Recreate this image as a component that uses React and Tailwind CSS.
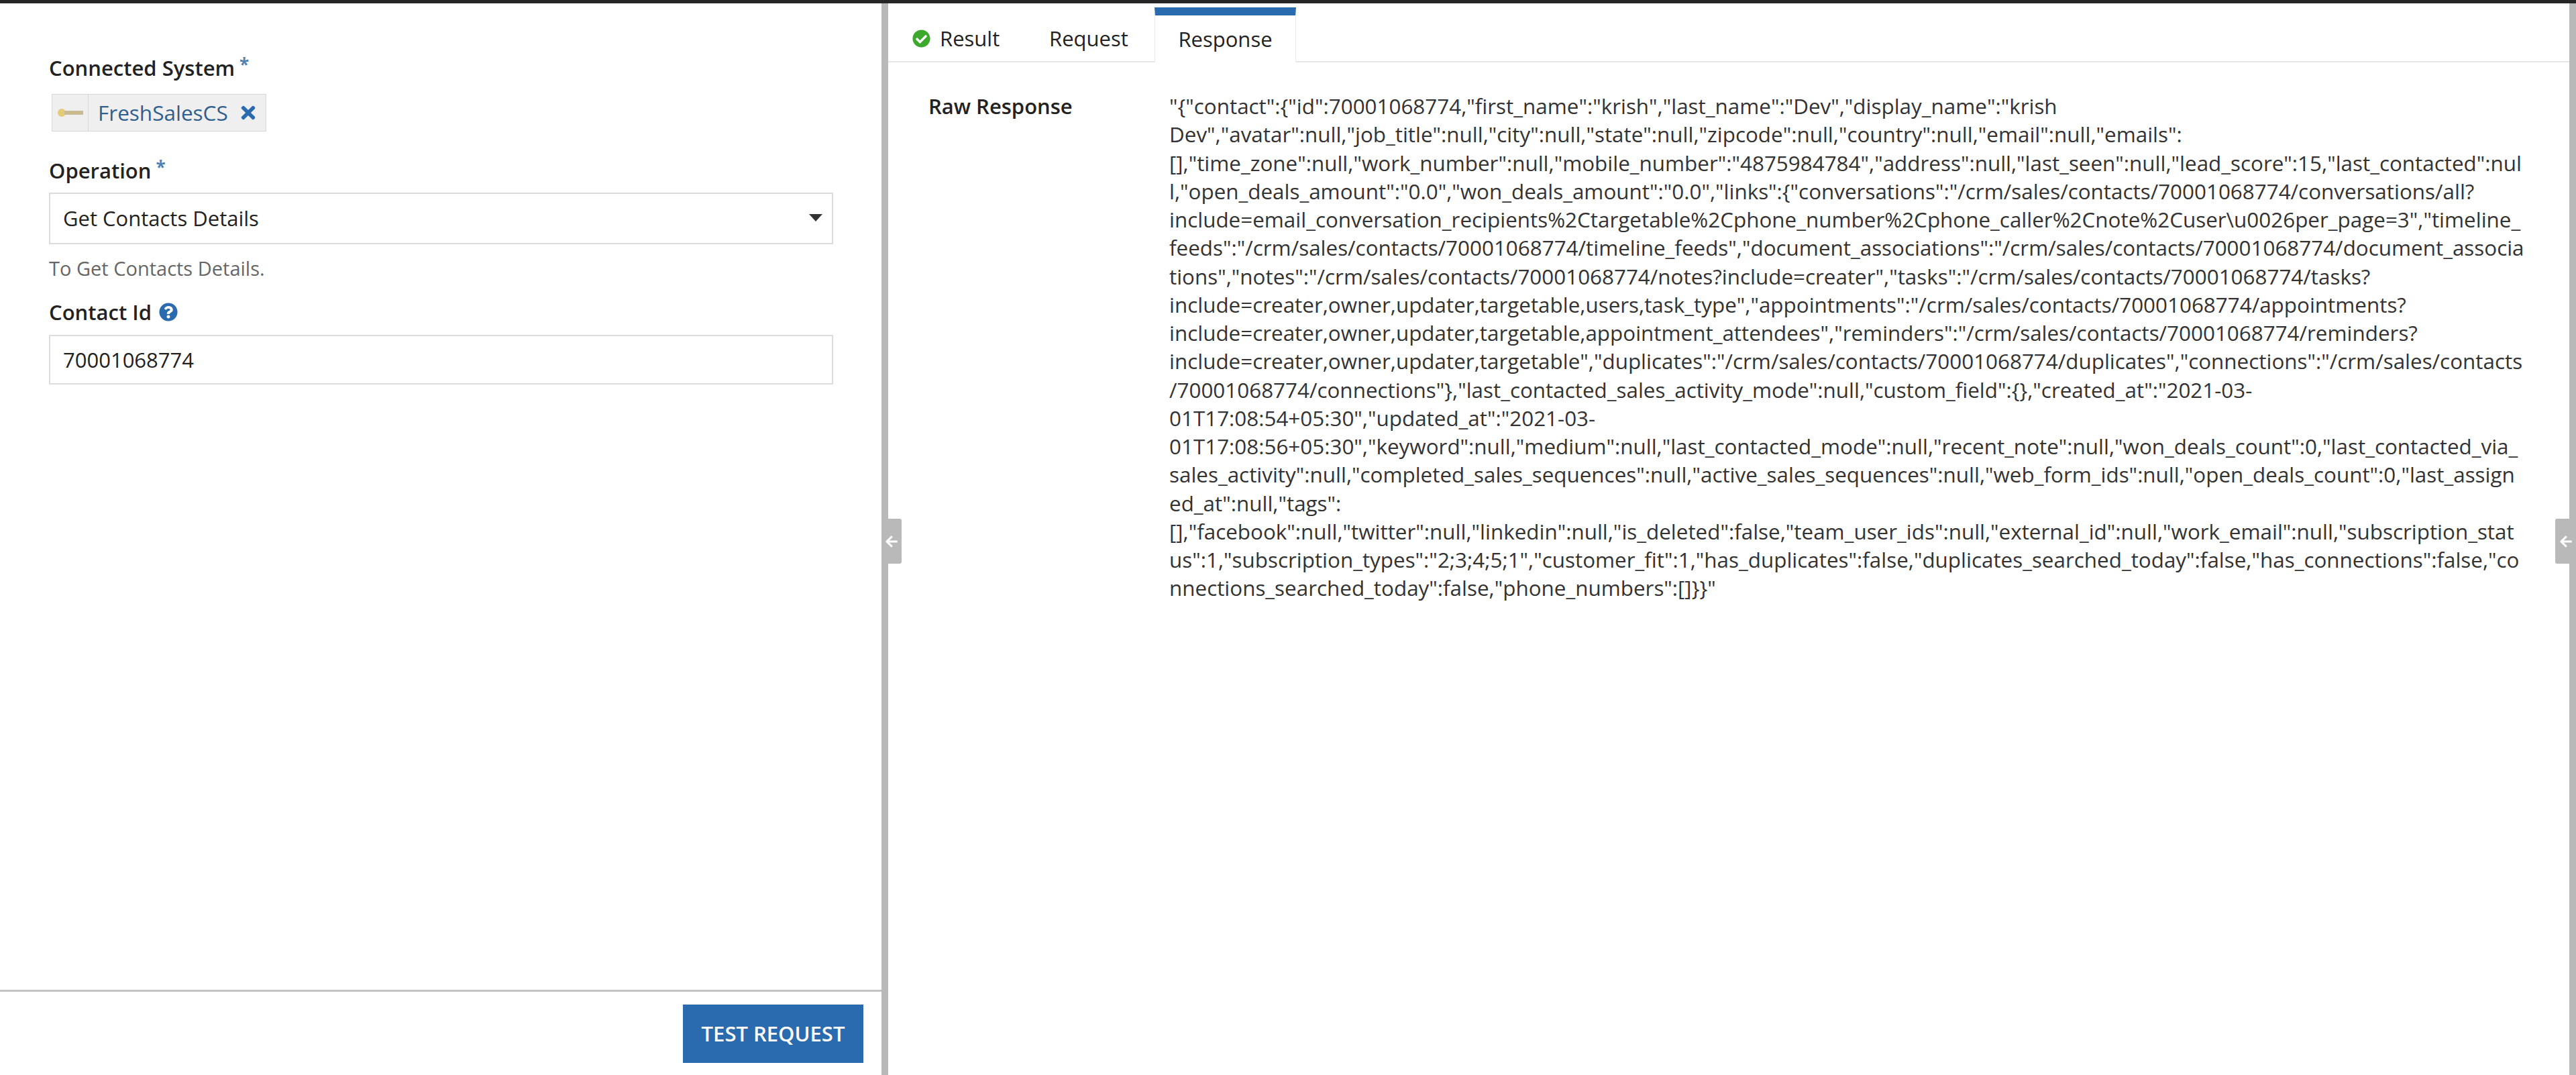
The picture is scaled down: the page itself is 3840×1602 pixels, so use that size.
import { FaArrowLeft, FaCheckCircle, FaQuestionCircle, FaTimes } from 'react-icons/fa';

const RAW_LINES = [
  '"{"contact":{"id":70001068774,"first_name":"krish","last_name":"Dev","display_name":"krish',
  'Dev","avatar":null,"job_title":null,"city":null,"state":null,"zipcode":null,"country":null,"email":null,"emails":',
  '[],"time_zone":null,"work_number":null,"mobile_number":"4875984784","address":null,"last_seen":null,"lead_score":15,"last_contacted":nul',
  'l,"open_deals_amount":"0.0","won_deals_amount":"0.0","links":{"conversations":"/crm/sales/contacts/70001068774/conversations/all?',
  'include=email_conversation_recipients%2Ctargetable%2Cphone_number%2Cphone_caller%2Cnote%2Cuser\\u0026per_page=3","timeline_',
  'feeds":"/crm/sales/contacts/70001068774/timeline_feeds","document_associations":"/crm/sales/contacts/70001068774/document_associa',
  'tions","notes":"/crm/sales/contacts/70001068774/notes?include=creater","tasks":"/crm/sales/contacts/70001068774/tasks?',
  'include=creater,owner,updater,targetable,users,task_type","appointments":"/crm/sales/contacts/70001068774/appointments?',
  'include=creater,owner,updater,targetable,appointment_attendees","reminders":"/crm/sales/contacts/70001068774/reminders?',
  'include=creater,owner,updater,targetable","duplicates":"/crm/sales/contacts/70001068774/duplicates","connections":"/crm/sales/contacts',
  '/70001068774/connections"},"last_contacted_sales_activity_mode":null,"custom_field":{},"created_at":"2021-03-',
  '01T17:08:54+05:30","updated_at":"2021-03-',
  '01T17:08:56+05:30","keyword":null,"medium":null,"last_contacted_mode":null,"recent_note":null,"won_deals_count":0,"last_contacted_via_',
  'sales_activity":null,"completed_sales_sequences":null,"active_sales_sequences":null,"web_form_ids":null,"open_deals_count":0,"last_assign',
  'ed_at":null,"tags":',
  '[],"facebook":null,"twitter":null,"linkedin":null,"is_deleted":false,"team_user_ids":null,"external_id":null,"work_email":null,"subscription_stat',
  'us":1,"subscription_types":"2;3;4;5;1","customer_fit":1,"has_duplicates":false,"duplicates_searched_today":false,"has_connections":false,"co',
  'nnections_searched_today":false,"phone_numbers":[]}}"',
];

function Handle({ className }) {
  return (
    <div className={`absolute top-[768px] flex h-[67px] items-center justify-center bg-[#b9b9b9] text-white ${className}`}>
      <FaArrowLeft size={20} />
    </div>
  );
}

function Required() {
  return <span className="mb-[10px] ml-[7px] text-[26px] font-bold leading-none text-[#4f81b5]">*</span>;
}

function Field({ label, children }) {
  return (
    <div>
      <div className="flex h-[40px] items-center text-[31px] font-semibold text-[#222]">{label}</div>
      {children}
    </div>
  );
}

function KeyIcon() {
  return (
    <svg width="40" height="14" viewBox="0 0 40 14">
      <circle cx="7" cy="7" r="6" fill="#e6cb78" />
      <rect x="11" y="4" width="28" height="6" fill="#c9bc92" />
    </svg>
  );
}

export default function App() {
  return (
    <div className="flex h-[1602px] w-[3840px] flex-col overflow-hidden bg-white font-['Open_Sans',sans-serif] text-[#222]">
      <div className="h-[5px] shrink-0 bg-[#262626]" />
      <div className="relative flex min-h-0 flex-1">
        {/* Left form */}
        <div className="flex w-[1314px] shrink-0 flex-col">
          <div className="flex-1 pl-[73px] pr-[72px] pt-[76px]">
            <Field
              label={
                <>
                  Connected System
                  <Required />
                </>
              }
            >
              <div className="ml-[4px] mt-[19px] flex h-[56px] w-[320px] items-center border border-[#d8d8d8] bg-[#efefef]">
                <div className="flex h-full w-[54px] shrink-0 items-center justify-center border-r border-[#d8d8d8]">
                  <KeyIcon />
                </div>
                <span className="ml-[14px] text-[31.5px] text-[#2f5f8f]">FreshSalesCS</span>
                <FaTimes size={30} className="ml-[15px] text-[#2a6aae]" />
              </div>
            </Field>

            <div className="mt-[38px]">
              <Field
                label={
                  <>
                    Operation
                    <Required />
                  </>
                }
              >
                <div className="mt-[13px] flex h-[77px] items-center justify-between border-2 border-[#dcdcdc] pl-[19px] pr-[14px] text-[31px]">
                  <span>Get Contacts Details</span>
                  <div className="mb-[2px] h-0 w-0 border-x-[10px] border-t-[11px] border-x-transparent border-t-[#333]" />
                </div>
              </Field>
            </div>

            <div className="mt-[18px] text-[29px] leading-[36px] text-[#666]">To Get Contacts Details.</div>

            <div className="mt-[27px]">
              <Field
                label={
                  <>
                    Contact Id
                    <FaQuestionCircle size={28} className="ml-[11px] text-[#2a6aae]" />
                  </>
                }
              >
                <div className="mt-[14px] flex h-[74px] items-center border-2 border-[#dcdcdc] pl-[19px] text-[31px]">70001068774</div>
              </Field>
            </div>
          </div>

          <div className="flex h-[127px] shrink-0 justify-end border-t-[3px] border-[#c4c4c4] pr-[27px] pt-[19px]">
            <button className="h-[87px] w-[269px] bg-[#2a6aae] text-[31px] font-semibold text-white">TEST REQUEST</button>
          </div>
        </div>

        <div className="w-[10px] shrink-0 bg-[#b9b9b9]" />

        {/* Right results */}
        <div className="flex min-w-0 flex-1 flex-col">
          <div className="flex h-[88px] shrink-0 items-stretch border-b-2 border-[#e6e6e6] pt-[6px]">
            <div className="flex w-[240px] items-center pl-[36px] pt-[12px] text-[31px]">
              <FaCheckCircle size={27} className="text-[#3ca82c]" />
              <span className="ml-[14px]">Result</span>
            </div>
            <div className="flex w-[157px] items-center pt-[12px] text-[31px]">Request</div>
            <div className="relative z-10 -mb-[2px] flex w-[211px] items-center justify-center border-x border-[#eaeaea] border-t-[12px] border-t-[#2a6aae] bg-white text-[31px]">
              Response
            </div>
          </div>

          <div className="flex pl-[60px] pt-[44px]">
            <div className="w-[359px] shrink-0 text-[31px] font-semibold leading-[42px]">Raw Response</div>
            <div className="text-[31.4px] leading-[42px] text-[#333]">
              {RAW_LINES.map((line, i) => (
                <div key={i} className="h-[42.25px] whitespace-nowrap">
                  {line}
                </div>
              ))}
            </div>
          </div>
        </div>

        <div className="w-[10px] shrink-0 bg-[#b9b9b9]" />

        <Handle className="left-[1314px] w-[30px] rounded-r-[3px]" />
        <Handle className="right-0 w-[31px] rounded-l-[3px]" />
      </div>
    </div>
  );
}
